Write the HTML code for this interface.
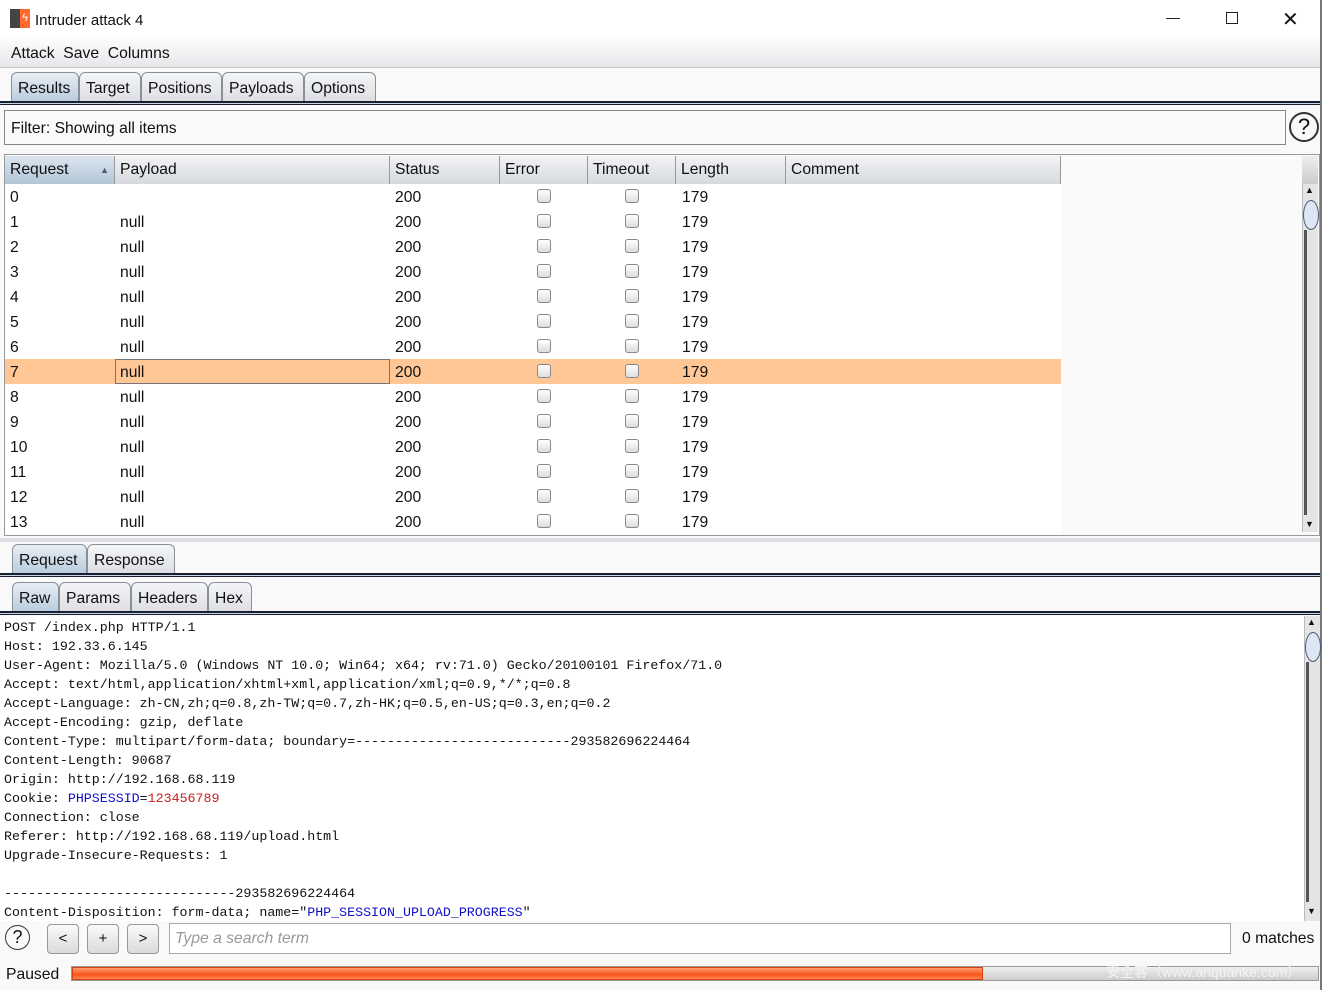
<!DOCTYPE html>
<html><head><meta charset="utf-8"><style>
*{margin:0;padding:0;box-sizing:border-box}
body{width:1322px;height:990px;background:#f9f9f9;font-family:"Liberation Sans",Arial,sans-serif;font-size:15.7px;color:#111;position:relative;overflow:hidden}
.a{position:absolute}
.tab{position:absolute;height:30px;border:1px solid #8a8f98;border-bottom:none;border-radius:6px 6px 0 0;background:linear-gradient(#f4f5f7,#dcdee3);padding:7px 6px 0;font-size:15.7px;white-space:nowrap}
.tab.sel{background:linear-gradient(#e8eef4,#b6cadc)}
.sep{position:absolute;left:0;width:1320px;height:4px;border-top:2px solid #1a2030;background:#c5d6e6;border-bottom:1px solid #1a2030}
.hd{position:absolute;top:156px;height:28px;border-right:1px solid #999;background:linear-gradient(#f2f3f5,#d6d9de);padding:5px 5px;font-size:15.7px}
.row{position:absolute;left:5px;width:1056px;height:25px;font-size:15.7px}
.row span{position:absolute;top:5px}
.cb{position:absolute;top:5px;width:14px;height:14px;border:1px solid #888;border-radius:3px;background:linear-gradient(#fff,#dcdcdc)}
.mono{font-family:"Liberation Mono","Noto Serif CJK SC",monospace;font-size:13.3px;line-height:19px;white-space:pre;color:#111}
.btn{position:absolute;top:924px;width:32px;height:30px;border:1px solid #999;border-radius:4px;background:linear-gradient(#fafafa,#dadada);text-align:center;line-height:28px;font-size:15px}
</style></head><body>
<div class="a" style="left:0;top:0;width:1322px;height:38px;background:#fff"></div>
<div class="a" style="left:10px;top:9px;width:10px;height:19px;background:#444"></div>
<div class="a" style="left:20px;top:9px;width:10px;height:19px;background:#ff6a2c;color:#fff;font-size:11px;line-height:19px;text-align:center">ϟ</div>
<div class="a" style="left:35px;top:12px;font-size:15px">Intruder attack 4</div>
<div class="a" style="left:1166px;top:18px;width:14px;height:1px;background:#222"></div>
<div class="a" style="left:1226px;top:12px;width:12px;height:12px;border:1px solid #222"></div>
<div class="a" style="left:1282px;top:7px;font-size:20px;font-weight:100">✕</div>
<div class="a" style="left:0;top:38px;width:1320px;height:30px;background:linear-gradient(#fdfdfd,#e6e7ea);border-bottom:1px solid #c8c8c8"></div>
<div class="a" style="left:11px;top:45px">Attack&nbsp; Save&nbsp; Columns</div>
<div class="a" style="left:1320px;top:0;width:2px;height:990px;background:#777"></div>
<div class="tab sel" style="left:11px;top:72px;width:68px;height:31px">Results</div>
<div class="tab" style="left:79px;top:72px;width:62px">Target</div>
<div class="tab" style="left:141px;top:72px;width:81px">Positions</div>
<div class="tab" style="left:222px;top:72px;width:82px">Payloads</div>
<div class="tab" style="left:304px;top:72px;width:72px">Options</div>
<div class="sep" style="top:101px"></div>
<div class="a" style="left:4px;top:110px;width:1282px;height:35px;border:1px solid #888;background:#fafafa;padding:9px 6px">Filter: Showing all items</div>
<div class="a" style="left:1289px;top:112px;width:30px;height:30px;border:2px solid #333;border-radius:50%;text-align:center;font-size:22px;line-height:26px">?</div>
<div class="a" style="left:4px;top:154px;width:1316px;height:382px;border:1px solid #999;background:#fafafa"></div>
<div class="a" style="left:5px;top:184px;width:1056px;height:351px;background:#fff"></div>
<div class="hd" style="left:5px;width:110px;background:linear-gradient(#dbe5ef,#b2c6d8)">Request<span style="position:absolute;right:5px;top:9px;font-size:9px;color:#557">▲</span></div>
<div class="hd" style="left:115px;width:275px">Payload</div>
<div class="hd" style="left:390px;width:110px">Status</div>
<div class="hd" style="left:500px;width:88px">Error</div>
<div class="hd" style="left:588px;width:88px">Timeout</div>
<div class="hd" style="left:676px;width:110px">Length</div>
<div class="hd" style="left:786px;width:275px">Comment</div>
<div id="rows"></div>
<div class="a" style="left:1302px;top:156px;width:16px;height:28px;background:linear-gradient(#eee,#ccc)"></div>
<div class="a" style="left:1302px;top:184px;width:16px;height:348px;background:#e4e4e4;border-left:1px solid #bbb"></div>
<div class="a" style="left:1305px;top:185px;font-size:9px">▲</div>
<div class="a" style="left:1305px;top:519px;font-size:9px">▼</div>
<div class="a" style="left:1303px;top:200px;width:16px;height:30px;border:1px solid #557;border-radius:50%;background:#dbe7f3"></div>
<div class="a" style="left:1304px;top:230px;width:3px;height:285px;background:#555"></div>
<div class="a" style="left:0;top:538px;width:1320px;height:4px;background:#dde0e4"></div>
<div class="tab sel" style="left:12px;top:544px;width:75px;height:31px">Request</div>
<div class="tab" style="left:87px;top:544px;width:88px">Response</div>
<div class="sep" style="top:573px"></div>
<div class="tab sel" style="left:12px;top:582px;width:47px;height:31px">Raw</div>
<div class="tab" style="left:59px;top:582px;width:72px">Params</div>
<div class="tab" style="left:131px;top:582px;width:77px">Headers</div>
<div class="tab" style="left:208px;top:582px;width:44px">Hex</div>
<div class="sep" style="top:611px"></div>
<div class="a" style="left:0;top:616px;width:1304px;height:305px;background:#fff"></div>
<div class="a mono" style="left:4px;top:618px">POST /index.php HTTP/1.1
Host: 192.33.6.145
User-Agent: Mozilla/5.0 (Windows NT 10.0; Win64; x64; rv:71.0) Gecko/20100101 Firefox/71.0
Accept: text/html,application/xhtml+xml,application/xml;q=0.9,*/*;q=0.8
Accept-Language: zh-CN,zh;q=0.8,zh-TW;q=0.7,zh-HK;q=0.5,en-US;q=0.3,en;q=0.2
Accept-Encoding: gzip, deflate
Content-Type: multipart/form-data; boundary=---------------------------293582696224464
Content-Length: 90687
Origin: http://192.168.68.119
Cookie: <span style="color:#1010c8">PHPSESSID</span>=<span style="color:#c82020">123456789</span>
Connection: close
Referer: http://192.168.68.119/upload.html
Upgrade-Insecure-Requests: 1

-----------------------------293582696224464
Content-Disposition: form-data; name="<span style="color:#1010c8">PHP_SESSION_UPLOAD_PROGRESS</span>"</div>
<div class="a" style="left:1304px;top:616px;width:16px;height:305px;background:#e4e4e4;border-left:1px solid #bbb"></div>
<div class="a" style="left:1307px;top:617px;font-size:9px">▲</div>
<div class="a" style="left:1307px;top:906px;font-size:9px">▼</div>
<div class="a" style="left:1305px;top:632px;width:16px;height:30px;border:1px solid #557;border-radius:50%;background:#dbe7f3"></div>
<div class="a" style="left:1306px;top:662px;width:3px;height:240px;background:#555"></div>
<div class="a" style="left:5px;top:925px;width:25px;height:25px;border:1.5px solid #333;border-radius:50%;text-align:center;font-size:18px;line-height:23px">?</div>
<div class="btn" style="left:47px">&lt;</div>
<div class="btn" style="left:87px">+</div>
<div class="btn" style="left:127px">&gt;</div>
<div class="a" style="left:169px;top:923px;width:1062px;height:31px;border:1px solid #aaa;background:#fff;padding:6px 5px;color:#999;font-style:italic">Type a search term</div>
<div class="a" style="left:1242px;top:930px">0 matches</div>
<div class="a" style="left:6px;top:966px">Paused</div>
<div class="a" style="left:71px;top:966px;width:1248px;height:15px;border:1px solid #999;background:linear-gradient(#eee,#ccc)"></div>
<div class="a" style="left:72px;top:967px;width:911px;height:13px;background:linear-gradient(#ff9c6a,#f5541c 60%,#ff8a50);border:1px solid #d84010"></div>
<div class="a" style="left:1106px;top:962px;font-size:14px;color:#f4f4f4;font-family:'Liberation Sans','Noto Sans CJK SC',sans-serif">安全客（www.anquanke.com）</div>
<script>
var h='';
for(var i=0;i<14;i++){
 var y=184+i*25, sel=i==7;
 h+='<div class="row" style="top:'+y+'px;'+(sel?'background:#ffc796':'')+'">'+
 '<span style="left:5px">'+i+'</span>'+(i?'<span style="left:115px">null</span>':'')+
 '<span style="left:390px">200</span><div class="cb" style="left:532px"></div><div class="cb" style="left:620px"></div>'+
 '<span style="left:677px">179</span>'+
 (sel?'<div style="position:absolute;left:110px;top:0;width:275px;height:25px;border:1px solid #777"></div>':'')+'</div>';
}
document.getElementById('rows').innerHTML=h;
</script>
</body></html>
